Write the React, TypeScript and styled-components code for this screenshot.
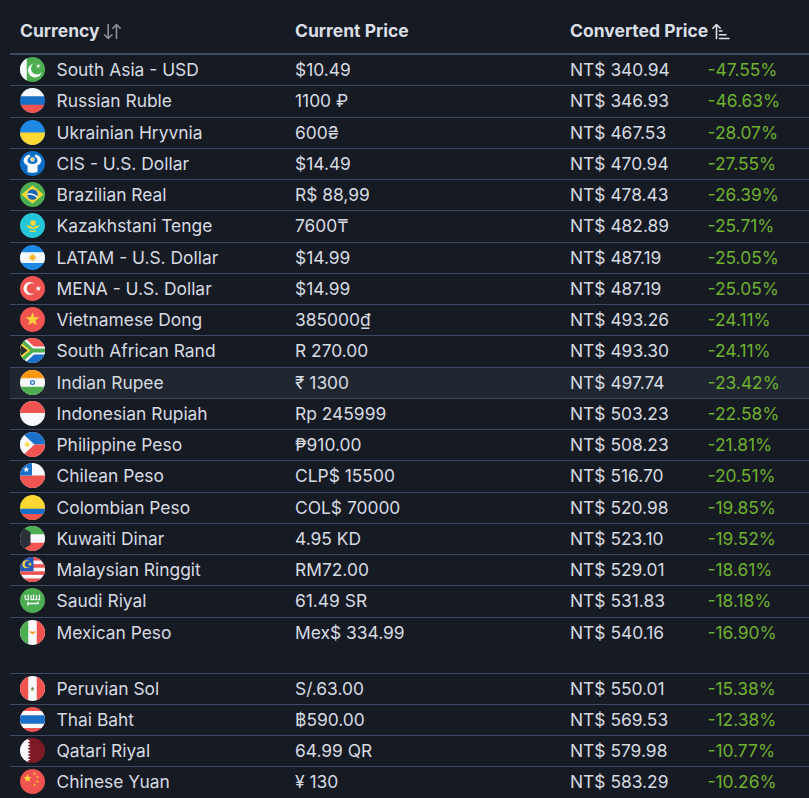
import React from "react";
import styled, { createGlobalStyle } from "styled-components";

const Global = createGlobalStyle`
  html, body { margin: 0; padding: 0; background: #161a23; overflow: hidden; }
  body { font-family: Inter, "Noto Sans", sans-serif; }
`;

const Page = styled.div`
  width: 809px;
  height: 798px;
  padding-left: 10px;
  box-sizing: border-box;
  overflow: hidden;
  background: #161a23;
`;

const Table = styled.table`
  width: 799px;
  table-layout: fixed;
  border-collapse: separate;
  border-spacing: 0;
  color: #d6dbe2;
  font-size: 17.4px;
`;

const Th = styled.th<{ $w: number }>`
  width: ${(p) => p.$w}px;
  height: 55px;
  box-sizing: border-box;
  padding: 8px 10px 0;
  text-align: left;
  font-size: 17.5px;
  font-weight: 700;
  line-height: 24px;
  color: #d9dee5;
  border-bottom: 2px solid #3d4a63;
  vertical-align: middle;
  white-space: nowrap;
`;

const HeadInner = styled.span`
  display: inline-flex;
  align-items: center;
  gap: 3px;
`;

const SortIcon = styled.svg<{ $active?: boolean }>`
  width: 20px;
  height: 20px;
  fill: none;
  stroke: ${(p) => (p.$active ? "#dfe3e9" : "#8b9099")};
  stroke-width: 1.6;
  stroke-linecap: round;
  stroke-linejoin: round;
  flex: none;
`;

const Row = styled.tr<{ $hi?: boolean; $tall?: boolean }>`
  background: ${(p) => (p.$hi ? "#1f2630" : "transparent")};
  height: ${(p) => (p.$tall ? "56px" : "31.25px")};
`;

const Td = styled.td`
  box-sizing: border-box;
  padding: 2px 10px 0;
  vertical-align: top;
  line-height: 25px;
  white-space: nowrap;
  border-bottom: 1px solid #3d4a63;
`;

const Change = styled(Td)`
  color: #6fb02f;
`;

const NameCell = styled.div`
  display: flex;
  align-items: center;
  gap: 11.5px;
  height: 25px;
`;

const FlagSvg = styled.svg`
  width: 25px;
  height: 25px;
  border-radius: 50%;
  flex: none;
  display: block;
`;

const R = "#f05451";
const W = "#f7f9fc";
const B = "#1a6fc9";
const G = "#4cae50";
const Y = "#fdd835";
const K = "#2a2f38";

const star = (cx: number, cy: number, r: number, n = 5, inner = 0.42) => {
  const pts: string[] = [];
  for (let i = 0; i < n * 2; i++) {
    const a = (Math.PI / n) * i - Math.PI / 2;
    const rr = i % 2 ? r * inner : r;
    pts.push(`${(cx + rr * Math.cos(a)).toFixed(2)},${(cy + rr * Math.sin(a)).toFixed(2)}`);
  }
  return pts.join(" ");
};

const Bg = ({ c }: { c: string }) => <rect width="100" height="100" fill={c} />;

const flags: Record<string, React.ReactNode> = {
  pk: (
    <>
      <Bg c={G} />
      <rect width="27" height="100" fill={W} />
      <circle cx="60" cy="54" r="28" fill={W} />
      <circle cx="68" cy="46" r="24" fill={G} />
      <polygon points={star(73, 36, 10)} fill={W} />
    </>
  ),
  ru: (
    <>
      <Bg c={B} />
      <rect width="100" height="33" fill={W} />
      <rect y="67" width="100" height="33" fill={R} />
    </>
  ),
  ua: (
    <>
      <Bg c="#1e88e5" />
      <rect y="50" width="100" height="50" fill={Y} />
    </>
  ),
  cis: (
    <>
      <Bg c="#0b6fc7" />
      <path d="M14 38 C16 26 26 16 38 14 L42 22 C34 26 30 32 30 40 C32 48 40 52 50 52 C60 52 68 48 70 40 C70 32 66 26 58 22 L62 14 C74 16 84 26 86 38 C84 48 78 56 70 58 L70 84 C60 88 40 88 30 84 L30 58 C22 56 16 48 14 38 Z" fill={W} />
      <circle cx="50" cy="34" r="9" fill={W} />
      <circle cx="50" cy="34" r="5" fill="#f5c33b" />
    </>
  ),
  br: (
    <>
      <Bg c={G} />
      <polygon points="50,14 94,50 50,86 6,50" fill={Y} />
      <circle cx="50" cy="50" r="21" fill="#1565b8" />
      <path d="M29 46 C45 42 60 47 71 58 L68 64 C57 53 45 49 29 52 Z" fill={W} />
    </>
  ),
  kz: (
    <>
      <Bg c="#26c6da" />
      <circle cx="52" cy="40" r="11" fill={Y} />
      <path d="M24 46 C28 58 40 64 52 64 C64 64 74 58 80 46 C74 50 66 52 62 52 L52 60 L42 52 C36 52 30 50 24 46 Z" fill={Y} />
      <rect x="38" y="70" width="26" height="5" fill={Y} />
    </>
  ),
  ar: (
    <>
      <Bg c="#1e88e5" />
      <rect y="29" width="100" height="43" fill={W} />
      <polygon points={star(50, 50, 16, 10, 0.6)} fill="#f5b82e" />
    </>
  ),
  tr: (
    <>
      <Bg c={R} />
      <circle cx="40" cy="50" r="26" fill={W} />
      <circle cx="48" cy="50" r="21" fill={R} />
      <polygon points={star(73, 50, 12)} fill={W} />
    </>
  ),
  vn: (
    <>
      <Bg c={R} />
      <polygon points={star(50, 50, 29)} fill="#fdd03b" />
    </>
  ),
  za: (
    <>
      <Bg c={W} />
      <rect width="100" height="34" fill={R} />
      <rect y="66" width="100" height="34" fill="#1a6fc9" />
      <polygon points="0,0 20,0 58,36 100,36 100,64 58,64 20,100 0,100" fill={W} />
      <polygon points="0,6 12,6 52,42 100,42 100,58 52,58 12,94 0,94" fill={G} />
      <polygon points="0,16 42,50 0,84" fill={Y} />
      <polygon points="0,26 30,50 0,74" fill={K} />
    </>
  ),
  in: (
    <>
      <Bg c={W} />
      <rect width="100" height="33" fill="#ff9810" />
      <rect y="67" width="100" height="33" fill={G} />
      <circle cx="50" cy="50" r="10" fill="#1a6fc9" />
      <circle cx="50" cy="50" r="5" fill={W} />
    </>
  ),
  id: (
    <>
      <Bg c={W} />
      <rect width="100" height="48" fill={R} />
    </>
  ),
  ph: (
    <>
      <Bg c={W} />
      <rect width="100" height="50" fill="#1a6fc9" />
      <rect y="50" width="100" height="50" fill={R} />
      <polygon points="0,0 4,0 58,50 4,100 0,100" fill={W} />
      <polygon points={star(29, 50, 14)} fill={Y} />
    </>
  ),
  cl: (
    <>
      <Bg c={W} />
      <rect y="50" width="100" height="50" fill={R} />
      <rect width="48" height="50" fill="#1a6fc9" />
      <polygon points={star(25, 26, 13)} fill={W} />
    </>
  ),
  co: (
    <>
      <Bg c={Y} />
      <rect y="55" width="100" height="23" fill="#1a6fc9" />
      <rect y="76" width="100" height="24" fill={R} />
    </>
  ),
  kw: (
    <>
      <Bg c={W} />
      <rect width="100" height="33" fill={G} />
      <rect y="67" width="100" height="33" fill={R} />
      <polygon points="0,0 42,25 42,75 0,100" fill={K} />
    </>
  ),
  my: (
    <>
      <Bg c={W} />
      {[0, 2, 4, 6].map((i) => (
        <rect key={i} y={i * 14.3} width="100" height="14.3" fill={R} />
      ))}
      <rect width="54" height="57" fill="#2257b8" />
      <circle cx="26" cy="29" r="16" fill={Y} />
      <circle cx="32" cy="29" r="13" fill="#2257b8" />
      <polygon points={star(40, 29, 9)} fill={Y} />
    </>
  ),
  sa: (
    <>
      <Bg c={G} />
      <path d="M20 28 L22 46 M32 26 L34 46 L24 46 M44 28 L44 48 M54 26 L54 46 L44 46 M66 28 L66 46 L58 46 M78 26 L78 46 L70 46" stroke={W} strokeWidth="5" fill="none" />
      <path d="M28 62 L72 62 L72 55 M32 56 L32 69" stroke={W} strokeWidth="6" fill="none" />
    </>
  ),
  mx: (
    <>
      <Bg c={W} />
      <rect width="33" height="100" fill={G} />
      <rect x="67" width="33" height="100" fill={R} />
      <path d="M38 46 C44 44 46 46 50 48 C54 46 56 44 62 46 C60 52 56 54 52 54 L50 60 L48 54 C44 54 40 52 38 46 Z" fill="#ff9810" />
    </>
  ),
  pe: (
    <>
      <Bg c={W} />
      <rect width="33" height="100" fill={R} />
      <rect x="67" width="33" height="100" fill={R} />
      <circle cx="50" cy="52" r="7" fill="#7cb56c" />
      <rect x="47.5" y="46" width="5" height="5" fill="#c05050" />
    </>
  ),
  th: (
    <>
      <Bg c={R} />
      <rect y="16" width="100" height="68" fill={W} />
      <rect y="33" width="100" height="34" fill="#1a6fc9" />
    </>
  ),
  qa: (
    <>
      <Bg c="#7d1a25" />
      <polygon points="0,0 38,0 30,6 42,12 30,18 42,24 30,30 42,36 30,42 42,50 30,56 42,62 30,68 42,74 30,80 42,86 30,92 38,100 0,100" fill={W} />
    </>
  ),
  cn: (
    <>
      <Bg c={R} />
      <polygon points={star(30, 38, 17)} fill={Y} />
      <polygon points={star(58, 18, 6)} fill={Y} />
      <polygon points={star(70, 32, 6)} fill={Y} />
      <polygon points={star(70, 50, 6)} fill={Y} />
      <polygon points={star(58, 64, 6)} fill={Y} />
    </>
  ),
};

const Flag = ({ code }: { code: string }) => (
  <FlagSvg viewBox="0 0 100 100">{flags[code]}</FlagSvg>
);

const rows: [string, string, string, string, string][] = [
  ["pk", "South Asia - USD", "$10.49", "NT$ 340.94", "-47.55%"],
  ["ru", "Russian Ruble", "1100 ₽", "NT$ 346.93", "-46.63%"],
  ["ua", "Ukrainian Hryvnia", "600₴", "NT$ 467.53", "-28.07%"],
  ["cis", "CIS - U.S. Dollar", "$14.49", "NT$ 470.94", "-27.55%"],
  ["br", "Brazilian Real", "R$ 88,99", "NT$ 478.43", "-26.39%"],
  ["kz", "Kazakhstani Tenge", "7600₸", "NT$ 482.89", "-25.71%"],
  ["ar", "LATAM - U.S. Dollar", "$14.99", "NT$ 487.19", "-25.05%"],
  ["tr", "MENA - U.S. Dollar", "$14.99", "NT$ 487.19", "-25.05%"],
  ["vn", "Vietnamese Dong", "385000₫", "NT$ 493.26", "-24.11%"],
  ["za", "South African Rand", "R 270.00", "NT$ 493.30", "-24.11%"],
  ["in", "Indian Rupee", "₹ 1300", "NT$ 497.74", "-23.42%"],
  ["id", "Indonesian Rupiah", "Rp 245999", "NT$ 503.23", "-22.58%"],
  ["ph", "Philippine Peso", "₱910.00", "NT$ 508.23", "-21.81%"],
  ["cl", "Chilean Peso", "CLP$ 15500", "NT$ 516.70", "-20.51%"],
  ["co", "Colombian Peso", "COL$ 70000", "NT$ 520.98", "-19.85%"],
  ["kw", "Kuwaiti Dinar", "4.95 KD", "NT$ 523.10", "-19.52%"],
  ["my", "Malaysian Ringgit", "RM72.00", "NT$ 529.01", "-18.61%"],
  ["sa", "Saudi Riyal", "61.49 SR", "NT$ 531.83", "-18.18%"],
  ["mx", "Mexican Peso", "Mex$ 334.99", "NT$ 540.16", "-16.90%"],
  ["pe", "Peruvian Sol", "S/.63.00", "NT$ 550.01", "-15.38%"],
  ["th", "Thai Baht", "฿590.00", "NT$ 569.53", "-12.38%"],
  ["qa", "Qatari Riyal", "64.99 QR", "NT$ 579.98", "-10.77%"],
  ["cn", "Chinese Yuan", "¥ 130", "NT$ 583.29", "-10.26%"],
];

export default function App() {
  return (
    <Page>
      <Global />
      <Table>
        <thead>
          <tr>
            <Th $w={275}>
              <HeadInner>
                Currency
                <SortIcon viewBox="0 0 20 20">
                  <path d="M5.2 3.5V17.5M1.5 13.8L5.2 17.5L9 13.8" />
                  <path d="M13.5 17.5V3.5M9.8 7.2L13.5 3.5L17.2 7.2" />
                </SortIcon>
              </HeadInner>
            </Th>
            <Th $w={275}>Current Price</Th>
            <Th $w={137.5}>
              <HeadInner>
                Converted Price
                <SortIcon $active viewBox="0 0 20 20">
                  <path d="M5.5 17.5V3.5M1.8 7.2L5.5 3.5L9.2 7.2" />
                  <path d="M8.5 10H11M8.5 13.7H15M8.5 17.5H18" />
                </SortIcon>
              </HeadInner>
            </Th>
            <Th $w={111.5} />
          </tr>
        </thead>
        <tbody>
          {rows.map(([code, name, price, conv, change]) => (
            <Row key={code} $hi={code === "in"} $tall={code === "mx"}>
              <Td>
                <NameCell>
                  <Flag code={code} />
                  {name}
                </NameCell>
              </Td>
              <Td>{price}</Td>
              <Td>{conv}</Td>
              <Change>{change}</Change>
            </Row>
          ))}
        </tbody>
      </Table>
    </Page>
  );
}
